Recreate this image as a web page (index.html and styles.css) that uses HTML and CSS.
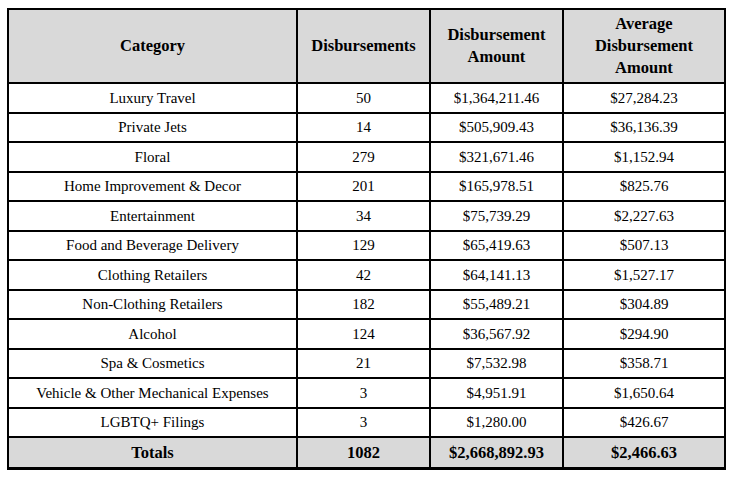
FILE: index.html
```html
<!DOCTYPE html>
<html>
<head>
<meta charset="utf-8">
<link rel="stylesheet" href="styles.css">
</head>
<body>
<table class="grid">
  <colgroup>
    <col class="c1"><col class="c2"><col class="c3"><col class="c4">
  </colgroup>
  <thead>
    <tr class="head">
      <th>Category</th>
      <th>Disbursements</th>
      <th>Disbursement<br>Amount</th>
      <th>Average<br>Disbursement<br>Amount</th>
    </tr>
  </thead>
  <tbody>
    <tr><td>Luxury Travel</td><td>50</td><td>$1,364,211.46</td><td>$27,284.23</td></tr>
    <tr><td>Private Jets</td><td>14</td><td>$505,909.43</td><td>$36,136.39</td></tr>
    <tr><td>Floral</td><td>279</td><td>$321,671.46</td><td>$1,152.94</td></tr>
    <tr><td>Home Improvement &amp; Decor</td><td>201</td><td>$165,978.51</td><td>$825.76</td></tr>
    <tr><td>Entertainment</td><td>34</td><td>$75,739.29</td><td>$2,227.63</td></tr>
    <tr><td>Food and Beverage Delivery</td><td>129</td><td>$65,419.63</td><td>$507.13</td></tr>
    <tr><td>Clothing Retailers</td><td>42</td><td>$64,141.13</td><td>$1,527.17</td></tr>
    <tr><td>Non-Clothing Retailers</td><td>182</td><td>$55,489.21</td><td>$304.89</td></tr>
    <tr><td>Alcohol</td><td>124</td><td>$36,567.92</td><td>$294.90</td></tr>
    <tr><td>Spa &amp; Cosmetics</td><td>21</td><td>$7,532.98</td><td>$358.71</td></tr>
    <tr><td>Vehicle &amp; Other Mechanical Expenses</td><td>3</td><td>$4,951.91</td><td>$1,650.64</td></tr>
    <tr><td>LGBTQ+ Filings</td><td>3</td><td>$1,280.00</td><td>$426.67</td></tr>
    <tr class="totals"><td>Totals</td><td>1082</td><td>$2,668,892.93</td><td>$2,466.63</td></tr>
  </tbody>
</table>
</body>
</html>
```
FILE: styles.css
```css
html, body {
  margin: 0;
  padding: 0;
  background: #fff;
}
body {
  padding: 8px 0 0 7px;
  font-family: "Liberation Serif", "Times New Roman", serif;
  color: #000;
}
.grid {
  border-collapse: collapse;
  table-layout: fixed;
  width: 717px;
  border: 2px solid #000;
}
.c1 { width: 289px; }
.c2 { width: 133px; }
.c3 { width: 133px; }
.c4 { width: 162px; }
.grid th, .grid td {
  border: 2px solid #000;
  text-align: center;
  vertical-align: middle;
  padding: 0;
}
.grid td {
  font-size: 15px;
  height: 27.5px;
  line-height: 18px;
}
.head th {
  background: #d9d9d9;
  font-size: 16.5px;
  font-weight: bold;
  line-height: 22px;
  height: 72px;
}
.totals td {
  background: #d9d9d9;
  font-size: 16.5px;
  font-weight: bold;
  height: 29px;
  border-bottom-width: 3px;
}
```
